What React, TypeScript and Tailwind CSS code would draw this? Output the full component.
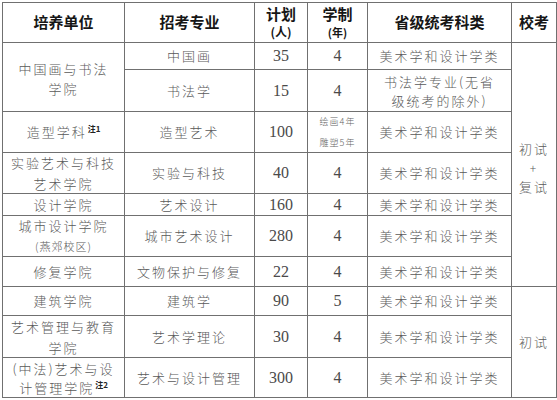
import React from "react";
import clsx from "clsx";

const border = "border-r border-b border-[#707070]";
const cjk = "font-['Noto_Sans_CJK_SC',sans-serif]";
const body = "text-[13px] tracking-[2px] text-[#5a5a5a] font-light font-['Noto_Sans_CJK_SC',sans-serif]";
const num = "text-[16px] text-[#4a4a4a] font-['Liberation_Serif','Noto_Sans_CJK_SC',serif]";
const head = "text-[15px] font-bold text-[#161616] font-['Noto_Sans_CJK_SC',sans-serif]";

function Cell({ className, children }: { className?: string; children?: React.ReactNode }) {
  return (
    <div className={clsx("flex flex-col items-center justify-center text-center", border, className)}>
      {children}
    </div>
  );
}

function Sup({ n }: { n: string }) {
  return (
    <span className="relative -top-[5px] ml-[1px] text-[8px] leading-[8px] font-bold tracking-normal text-[#222] font-['Noto_Sans_CJK_SC',sans-serif]">
      注{n}
    </span>
  );
}

export default function App() {
  const body1 = (t: string) => <Cell className={body}>{t}</Cell>;
  return (
    <div className="w-[557px] h-[400px] bg-white pl-[2px] pt-[2px]">
      <div className="grid grid-cols-[122px_130px_53px_60px_144px_45px] grid-rows-[40px_27px_42px_41px_41px_22px_41px_30px_29px_42px_40px] w-[555px] border-l border-t border-[#707070]">
        {/* header */}
        <Cell className={head}>培养单位</Cell>
        <Cell className={head}>招考专业</Cell>
        <Cell className={clsx(head, "leading-[18px]")}>
          <span>计划</span>
          <span className="text-[12px]">(人)</span>
        </Cell>
        <Cell className={clsx(head, "leading-[18px]")}>
          <span>学制</span>
          <span className="text-[11px]">(年)</span>
        </Cell>
        <Cell className={head}>省级统考科类</Cell>
        <Cell className={head}>校考</Cell>

        {/* row 1 */}
        <Cell className={clsx(body, "row-span-2 leading-[20px] pt-[3px]")}>
          <span>中国画与书法</span>
          <span>学院</span>
        </Cell>
        {body1("中国画")}
        <Cell className={num}>35</Cell>
        <Cell className={num}>4</Cell>
        {body1("美术学和设计学类")}
        <Cell className={clsx(body, "row-span-7 leading-[19px] tracking-[1px] pt-[6px]")}>
          <span>初试</span>
          <span className="text-[12px]">+</span>
          <span>复试</span>
        </Cell>

        {/* row 2 */}
        {body1("书法学")}
        <Cell className={num}>15</Cell>
        <Cell className={num}>4</Cell>
        <Cell className={clsx(body, "leading-[19px]")}>
          <span>书法学专业(无省</span>
          <span>级统考的除外)</span>
        </Cell>

        {/* row 3 */}
        <Cell className={body}>
          <span>
            造型学科
            <Sup n="1" />
          </span>
        </Cell>
        {body1("造型艺术")}
        <Cell className={num}>100</Cell>
        <Cell className={clsx("text-[9px] tracking-[1px] leading-[21px] text-[#666] font-light", cjk)}>
          <span>绘画4年</span>
          <span>雕塑5年</span>
        </Cell>
        {body1("美术学和设计学类")}

        {/* row 4 */}
        <Cell className={clsx(body, "leading-[21px]")}>
          <span>实验艺术与科技</span>
          <span>艺术学院</span>
        </Cell>
        {body1("实验与科技")}
        <Cell className={num}>40</Cell>
        <Cell className={num}>4</Cell>
        {body1("美术学和设计学类")}

        {/* row 5 */}
        {body1("设计学院")}
        {body1("艺术设计")}
        <Cell className={num}>160</Cell>
        <Cell className={num}>4</Cell>
        {body1("美术学和设计学类")}

        {/* row 6 */}
        <Cell className={clsx(body, "leading-[20px]")}>
          <span>城市设计学院</span>
          <span className="text-[11px] tracking-[1px]">(燕郊校区)</span>
        </Cell>
        {body1("城市艺术设计")}
        <Cell className={num}>280</Cell>
        <Cell className={num}>4</Cell>
        {body1("美术学和设计学类")}

        {/* row 7 */}
        {body1("修复学院")}
        {body1("文物保护与修复")}
        <Cell className={num}>22</Cell>
        <Cell className={num}>4</Cell>
        {body1("美术学和设计学类")}

        {/* row 8 */}
        {body1("建筑学院")}
        {body1("建筑学")}
        <Cell className={num}>90</Cell>
        <Cell className={num}>5</Cell>
        {body1("美术学和设计学类")}
        <Cell className={clsx(body, "row-span-3 tracking-[1px]")}>初试</Cell>

        {/* row 9 */}
        <Cell className={clsx(body, "leading-[21px]")}>
          <span>艺术管理与教育</span>
          <span>学院</span>
        </Cell>
        {body1("艺术学理论")}
        <Cell className={num}>30</Cell>
        <Cell className={num}>4</Cell>
        {body1("美术学和设计学类")}

        {/* row 10 */}
        <Cell className={clsx(body, "leading-[19px]")}>
          <span>(中法)艺术与设</span>
          <span>
            计管理学院
            <Sup n="2" />
          </span>
        </Cell>
        {body1("艺术与设计管理")}
        <Cell className={num}>300</Cell>
        <Cell className={num}>4</Cell>
        {body1("美术学和设计学类")}
      </div>
    </div>
  );
}
